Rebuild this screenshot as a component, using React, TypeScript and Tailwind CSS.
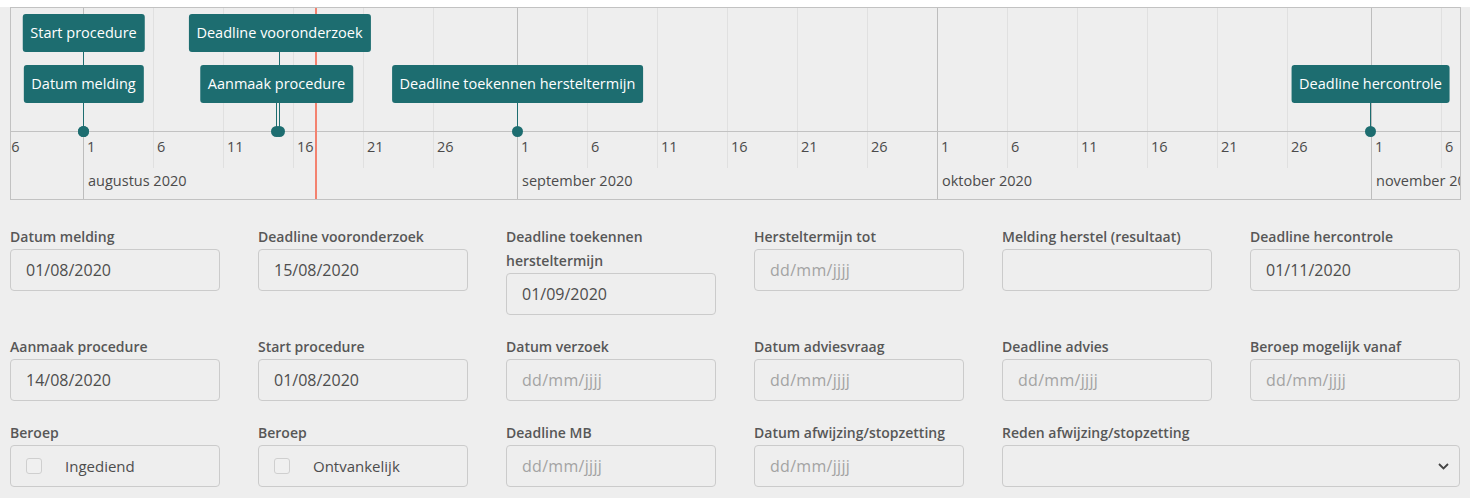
import React from 'react';

const DAY = 14;
const ORIGIN = 72; // 1 augustus, x inside the timeline
const AXIS = 123;
const TEAL = '#1d6d70';

const xOf = (d: number) => ORIGIN + d * DAY;

const months = [
  { name: 'juli 2020', start: -31, label: false },
  { name: 'augustus 2020', start: 0, label: true },
  { name: 'september 2020', start: 31, label: true },
  { name: 'oktober 2020', start: 61, label: true },
  { name: 'november 2020', start: 92, label: true },
];

const ticks: { x: number; label: number; major: boolean }[] = [];
months.forEach((m) => {
  [1, 6, 11, 16, 21, 26].forEach((day) => {
    const x = xOf(m.start + day - 1);
    if (x > -30 && x < 1500) ticks.push({ x, label: day, major: day === 1 });
  });
});

const items = [
  { label: 'Start procedure', x: 72, top: 6 },
  { label: 'Deadline vooronderzoek', x: 268, top: 6 },
  { label: 'Datum melding', x: 72, top: 57 },
  { label: 'Aanmaak procedure', x: 265, top: 57 },
  { label: 'Deadline toekennen hersteltermijn', x: 506, top: 57 },
  { label: 'Deadline hercontrole', x: 1359, top: 57 },
];

const Timeline = () => (
  <div className="relative ml-[10px] mt-[7px] h-[193px] w-[1451px] overflow-hidden border border-[#c2c2c2]">
    {/* grid */}
    {ticks.map((t) => (
      <div
        key={'g' + t.x}
        className={`absolute top-0 w-px ${t.major ? 'h-full bg-[#bdbdbd]' : 'h-[160px] bg-[#e0e0e0]'}`}
        style={{ left: t.x }}
      />
    ))}
    <div className="absolute left-0 right-0 h-px bg-[#c2c2c2]" style={{ top: AXIS }} />
    {ticks.map((t) => (
      <div
        key={'l' + t.x}
        className="absolute top-[129px] text-[14.5px] leading-[20px] text-[#4b4b4b]"
        style={{ left: t.x + 4 }}
      >
        {t.label}
      </div>
    ))}
    {months
      .filter((m) => m.label)
      .map((m) => (
        <div
          key={m.name}
          className="absolute top-[163px] whitespace-nowrap text-[14.5px] leading-[20px] text-[#4b4b4b]"
          style={{ left: xOf(m.start) + 5 }}
        >
          {m.name}
        </div>
      ))}

    {/* huidige dag */}
    <div className="absolute top-0 h-full w-[2px] bg-[#f3826f]" style={{ left: 304 }} />

    {/* items */}
    {items.map((it) => (
      <div
        key={'line' + it.label}
        className="absolute w-px"
        style={{ left: it.x, top: it.top + 38, height: AXIS - it.top - 38, background: TEAL }}
      />
    ))}
    {items.map((it) => (
      <div
        key={'box' + it.label}
        className="absolute flex h-[38px] -translate-x-1/2 items-center whitespace-nowrap rounded-[3px] px-[8px] text-[14.5px] text-white"
        style={{ left: it.x + 0.5, top: it.top, background: TEAL }}
      >
        {it.label}
      </div>
    ))}
    {items.map((it) => (
      <div
        key={'dot' + it.label}
        className="absolute h-[11px] w-[11px] rounded-full"
        style={{ left: it.x - 5, top: AXIS - 5, background: TEAL }}
      />
    ))}
  </div>
);

const Label = ({ children }: { children: React.ReactNode }) => (
  <div className="text-[14px] font-semibold leading-[24px] text-[#575757]">{children}</div>
);

const DateField = ({ label, value }: { label: string; value?: string }) => (
  <div className="flex flex-col">
    <Label>{label}</Label>
    <div className="flex h-[42px] w-[210px] items-center rounded-[4px] border border-[#cbcbcb] px-[15px] text-[16px]">
      {value ? (
        <span className="text-[#4d4d4d]">{value}</span>
      ) : (
        <span className="tracking-[0.3px] text-[#a3a3a3]">dd/mm/jjjj</span>
      )}
    </div>
  </div>
);

const CheckField = ({ label, text }: { label: string; text: string }) => (
  <div className="flex flex-col">
    <Label>{label}</Label>
    <div className="flex h-[42px] w-[210px] items-center rounded-[4px] border border-[#cbcbcb] pl-[15px] text-[15px] text-[#4d4d4d]">
      <span className="h-[16px] w-[16px] rounded-[3px] border border-[#cfcfcf] bg-[#f0f0f0]" />
      <span className="ml-[23px]">{text}</span>
    </div>
  </div>
);

export default function App() {
  return (
    <div className="min-h-[498px] bg-[#eeeeee] font-['Open_Sans',sans-serif]">
      <Timeline />
      <div className="ml-[10px] mt-[25px] grid w-[1450px] grid-cols-[repeat(6,210px)] items-start gap-x-[38px] gap-y-[20px]">
        <DateField label="Datum melding" value="01/08/2020" />
        <DateField label="Deadline vooronderzoek" value="15/08/2020" />
        <DateField label="Deadline toekennen hersteltermijn" value="01/09/2020" />
        <DateField label="Hersteltermijn tot" />
        <div className="flex flex-col">
          <Label>Melding herstel (resultaat)</Label>
          <div className="h-[42px] w-[210px] rounded-[4px] border border-[#cbcbcb]" />
        </div>
        <DateField label="Deadline hercontrole" value="01/11/2020" />

        <DateField label="Aanmaak procedure" value="14/08/2020" />
        <DateField label="Start procedure" value="01/08/2020" />
        <DateField label="Datum verzoek" />
        <DateField label="Datum adviesvraag" />
        <DateField label="Deadline advies" />
        <DateField label="Beroep mogelijk vanaf" />

        <CheckField label="Beroep" text="Ingediend" />
        <CheckField label="Beroep" text="Ontvankelijk" />
        <DateField label="Deadline MB" />
        <DateField label="Datum afwijzing/stopzetting" />
        <div className="col-span-2 flex flex-col">
          <Label>Reden afwijzing/stopzetting</Label>
          <div className="flex h-[42px] w-[458px] items-center justify-end rounded-[4px] border border-[#cbcbcb] pr-[10px]">
            <svg width="11" height="7" viewBox="0 0 11 7" fill="none">
              <path d="M1 1l4.5 4.5L10 1" stroke="#444" strokeWidth="1.8" />
            </svg>
          </div>
        </div>
      </div>
    </div>
  );
}
